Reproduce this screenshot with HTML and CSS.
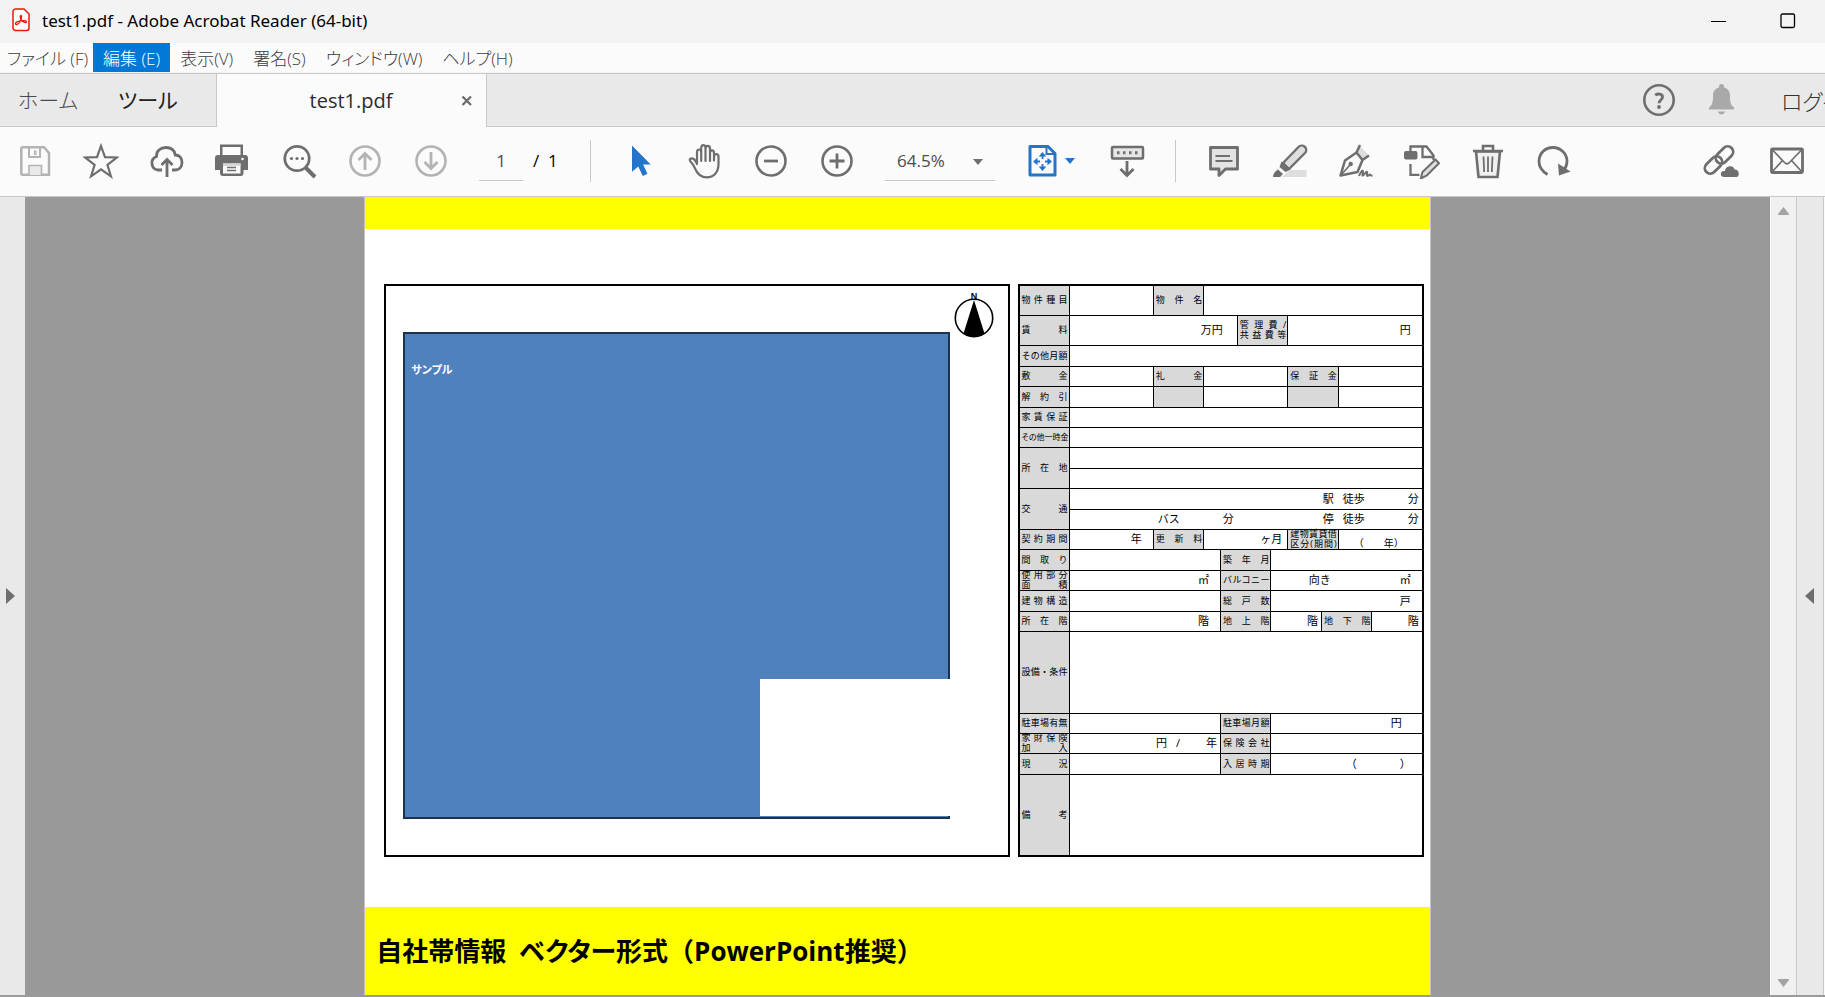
FILE: index.html
```html
<!DOCTYPE html>
<html lang="ja">
<head>
<meta charset="utf-8">
<title>test1.pdf - Adobe Acrobat Reader (64-bit)</title>
<link rel="stylesheet" href="styles.css">
</head>
<body>
<div class="window">
  <header class="titlebar">
    <svg class="app-icon" viewBox="0 0 18 24"><path d="M3.500 1h8.500l5 5v14a2.500 2.500 0 0 1-2.500 2.500h-11A2.500 2.500 0 0 1 1 20V3.500A2.500 2.500 0 0 1 3.500 1z" fill="#fff" stroke="#f0170b" stroke-width="1.500"/><path d="M3.500 16c-.8-1.500 3-3 5-3.200 2.300-.4 6-.4 6 1 0 1.700-3.200.4-4.700-1.300C8.500 11 7.500 8 8.700 7.500c1.500-.4.8 3.500-.7 6-1.300 2.200-3.700 4-4.500 2.500z" fill="none" stroke="#f0170b" stroke-width="1.300"/></svg>
    <h1 class="title">test1.pdf - Adobe Acrobat Reader (64-bit)</h1>
    <div class="controls">
      <button class="control" aria-label="最小化"><svg viewBox="0 0 16 16"><path d="M0 8.500h15" stroke="#000"/></svg></button>
      <button class="control" aria-label="最大化"><svg viewBox="0 0 16 16"><rect x="1" y="1" width="13.500" height="13.500" rx="1.500" fill="none" stroke="#000" stroke-width="1.300"/></svg></button>
    </div>
  </header>

  <nav class="menubar">
    <button class="menu">ファイル (F)</button>
    <button class="menu menu-active">編集 (E)</button>
    <button class="menu">表示(V)</button>
    <button class="menu">署名(S)</button>
    <button class="menu">ウィンドウ(W)</button>
    <button class="menu">ヘルプ(H)</button>
  </nav>

  <div class="tabbar">
    <div class="home-tabs">
      <button class="tab">ホーム</button>
      <button class="tab tab-dark">ツール</button>
    </div>
    <div class="doc-tab">
      <button class="doc-name">test1.pdf</button>
      <button class="doc-close" aria-label="閉じる"><svg viewBox="0 0 12 12"><path d="M1.500 1.500l8.500 8.500M10 1.500L1.500 10" stroke="#6a6a6a" stroke-width="2.200"/></svg></button>
    </div>
    <div class="account">
      <button class="icon" aria-label="ヘルプ"><svg viewBox="0 0 36 36"><circle cx="18" cy="18" r="14.700" fill="none" stroke="#6e6e6e" stroke-width="2.600"/><path d="M14.200 13.200c2.500-1.800 7.300-1.700 7.300 1.700 0 3-3.500 3.200-3.500 6.300" fill="none" stroke="#6e6e6e" stroke-width="2.800"/><circle cx="18" cy="25" r="1.900" fill="#6e6e6e"/></svg></button>
      <button class="icon" aria-label="通知"><svg viewBox="0 0 36 36"><path d="M16 4.500a2 2 0 0 1 5 0v1c4.500 1.200 6 4.500 6 8.500 0 6 .5 9 4 11.500v2H6v-2C9.500 23 10 20 10 14c0-4 1.500-7.300 6-8.500zM15 29.500h7c-.5 2-2 3-3.500 3s-3-1-3.500-3z" fill="#a9a9a9"/></svg></button>
      <button class="login">ログイン</button>
    </div>
  </div>

  <div class="toolbar">
    <button class="icon" aria-label="保存"><svg viewBox="0 0 36 36"><path d="M5.500 4.200H27l5 5.800v21.800H5.500a1.200 1.200 0 0 1-1.200-1.200V5.400a1.200 1.200 0 0 1 1.200-1.200z" fill="#fbfbfb" stroke="#b3b3b3" stroke-width="2.500"/><path d="M12 4.500v9.500h11V4.500" fill="none" stroke="#b3b3b3" stroke-width="2"/><path d="M12 32V22.500h12.500V32" fill="#eaeaea" stroke="#b3b3b3" stroke-width="1.600"/><path d="M17.500 8h1.500v3.500h-1.500z" fill="none" stroke="#b3b3b3" stroke-width="1.200"/></svg></button>
    <button class="icon" aria-label="スター"><svg viewBox="0 0 36 36"><path d="M18 3l4 11.200 12 .3-9.600 7.300 3.500 11.500L18 26.400l-9.900 6.900 3.500-11.500L2 14.500l12-.3z" fill="none" stroke="#6e6e6e" stroke-width="2.200"/></svg></button>
    <button class="icon" aria-label="アップロード"><svg viewBox="0 0 36 36"><path d="M13 27H9a7 7 0 0 1-1.500-13.500C7 8 11.500 4.500 17 4.500c5 0 8.500 3 9.300 7.500C31 12 33 16 33 19.500c0 4.500-3 7.500-7 7.500h-3" fill="none" stroke="#6e6e6e" stroke-width="2.800"/><path d="M18 34V16.500M12.500 22l5.500-5.500 5.500 5.500" fill="none" stroke="#6e6e6e" stroke-width="2.800"/></svg></button>
    <button class="icon" aria-label="印刷"><svg viewBox="0 0 36 36"><path d="M5 1.500h23V12H5zM3 12h27a3 3 0 0 1 3 3v12h-4.500v3a3 3 0 0 1-3 3H8a3 3 0 0 1-3-3v-3H0V15a3 3 0 0 1 3-3z" fill="#6e6e6e"/><path d="M7.500 4h18v8h-18zM8 20.500h17.500v10H8z" fill="#fbfbfb"/><path d="M8 20.500h17.500v2.500H8z" fill="#d6d6d6"/><path d="M12 24.500h9M12 27.500h9" stroke="#6e6e6e" stroke-width="1.500"/><circle cx="27.500" cy="16" r="1.300" fill="#fff"/></svg></button>
    <button class="icon" aria-label="検索"><svg viewBox="0 0 36 36"><circle cx="16" cy="15.500" r="12.200" fill="none" stroke="#6e6e6e" stroke-width="2.800"/><path d="M25 25l9 9" stroke="#6e6e6e" stroke-width="4"/><g fill="#6e6e6e"><circle cx="10.500" cy="15.500" r="1.600"/><circle cx="16" cy="15.500" r="1.600"/><circle cx="21.500" cy="15.500" r="1.600"/></g></svg></button>
    <button class="icon" aria-label="前のページ"><svg viewBox="0 0 36 36"><circle cx="18" cy="18" r="14.500" fill="none" stroke="#b3b3b3" stroke-width="2.600"/><path d="M18 27V10.500M11.500 17l6.500-6.500 6.500 6.500" fill="none" stroke="#b3b3b3" stroke-width="2.800"/></svg></button>
    <button class="icon" aria-label="次のページ"><svg viewBox="0 0 36 36"><circle cx="18" cy="18" r="14.500" fill="none" stroke="#b3b3b3" stroke-width="2.600"/><path d="M18 9v16.500M11.500 19l6.500 6.500 6.500-6.500" fill="none" stroke="#b3b3b3" stroke-width="2.800"/></svg></button>
    <div class="pager"><input class="page-no" type="text" value="1" aria-label="ページ番号"><span class="page-total">/&nbsp; 1</span></div>
    <span class="divider"></span>
    <button class="icon" aria-label="選択ツール"><svg viewBox="0 0 36 36"><path d="M11 2.500v26.300l6.200-5.300 4.600 9.500 4.600-2.200-4.300-9.300h7.600z" fill="#2474c9"/></svg></button>
    <button class="icon" aria-label="手のひらツール"><svg viewBox="0 0 36 36"><path d="M10 21V9.500c0-4 4.200-4 4.200 0V18 5c0-3.800 4.300-3.800 4.300 0v13V5.500c0-3.500 4.500-3.500 4.500 0V18v-8c0-3.500 4-3.500 4 0v7.500-4c0-3.300 4.500-3.300 4.500 0V21c0 8-4.500 13.300-12 13.300-6 0-8.700-3-10.700-7.300-1.500-3.200-2.300-5.500-5.300-8.500-2-2.500 1-4 3.200-2.500 1.800 1.300 2.300 3 3.300 5z" fill="#fbfbfb" stroke="#6e6e6e" stroke-width="2.200" stroke-linejoin="round"/></svg></button>
    <button class="icon" aria-label="縮小"><svg viewBox="0 0 36 36"><circle cx="18" cy="18" r="14.500" fill="none" stroke="#6e6e6e" stroke-width="2.600"/><path d="M11 18h14" stroke="#6e6e6e" stroke-width="2.800"/></svg></button>
    <button class="icon" aria-label="拡大"><svg viewBox="0 0 36 36"><circle cx="18" cy="18" r="14.500" fill="none" stroke="#6e6e6e" stroke-width="2.600"/><path d="M10.500 18h15M18 10.500v15" stroke="#6e6e6e" stroke-width="2.800"/></svg></button>
    <div class="zoom">
      <select class="zoom-select" aria-label="ズーム"><option>64.5%</option></select>
      <svg class="zoom-arrow" viewBox="0 0 10 6"><path d="M0 0h10L5 6z" fill="#6e6e6e"/></svg>
    </div>
    <button class="icon icon-fit" aria-label="ページに合わせる"><svg viewBox="0 0 36 36"><path d="M5 3.500h18l7 7v21.500H5z" fill="none" stroke="#2474c9" stroke-width="3" stroke-linejoin="round"/><path d="M21.500 3.500V11H30" fill="none" stroke="#2474c9" stroke-width="2"/><path d="M17.500 12v4M17.500 21v4M11 18.500h4M20 18.500h4" stroke="#2474c9" stroke-width="1.800"/><path d="M17.500 9l3.800 4.500h-7.600zM17.500 28l3.800-4.500h-7.600zM8 18.500l4.500-3.800v7.600zM27 18.500l-4.500-3.800v7.600z" fill="#2474c9"/></svg><svg class="fit-arrow" viewBox="0 0 10 6"><path d="M0 0h10L5 6z" fill="#2474c9"/></svg></button>
    <button class="icon" aria-label="スクロールモード"><svg viewBox="0 0 36 36"><rect x="3" y="4" width="31" height="11.500" rx="1" fill="#e6e6e6" stroke="#6e6e6e" stroke-width="2.500"/><path d="M8 9.800h22" stroke="#6e6e6e" stroke-width="3" stroke-dasharray="2.500 3.500"/><path d="M18 18v14M11.500 26l6.500 6.500 6.500-6.500" fill="none" stroke="#6e6e6e" stroke-width="2.800"/></svg></button>
    <span class="divider"></span>
    <button class="icon" aria-label="注釈"><svg viewBox="0 0 36 36"><path d="M4.500 4.500h27V26H19.500L13 32.500V26H4.500z" fill="#e3e3e3" stroke="#6e6e6e" stroke-width="2.800" stroke-linejoin="round"/><path d="M9.500 13H24M9.500 18h17" stroke="#6e6e6e" stroke-width="2"/></svg></button>
    <button class="icon" aria-label="ハイライト"><svg viewBox="0 0 36 36"><path d="M18 27h16.500v7H9.500z" fill="#dedede"/><path d="M11 20L26.500 4a4.400 4.400 0 0 1 6.500 6L17 26z" fill="#dedede" stroke="#6e6e6e" stroke-width="2.400" stroke-linejoin="round"/><path d="M9.500 18.500l9 8-5 2.500-6-5zM6 26.500l5 4.500-3 3H1c0-3 2-6 5-7.500z" fill="#6e6e6e"/></svg></button>
    <button class="icon" aria-label="署名"><svg viewBox="0 0 36 36"><path d="M22 3l8.500 9-6 5-6-8z" fill="#dedede"/><path d="M22 2l-3.500 7.500L7 17.500 2.500 32.500l17-3.500 5-12L31 12.500M18.500 9.500l6 7.500" fill="none" stroke="#6e6e6e" stroke-width="2.500" stroke-linejoin="round"/><path d="M3 32l9-10" stroke="#6e6e6e" stroke-width="1.700"/><circle cx="12.700" cy="21" r="2.200" fill="#6e6e6e"/><path d="M21 33c1.500-4 3.500-6 4-5s-1.500 5 0 4.500 3-4.500 4-3.500-1 4 .5 4 2-2 2.500-1.500 0 1.500 2.500 1" fill="none" stroke="#6e6e6e" stroke-width="2"/></svg></button>
    <button class="icon" aria-label="編集と変換"><svg viewBox="0 0 36 36"><path d="M6.500 8V3.500h16l7 9V17M6.500 21v10.800h9M18.500 3.500v10.500h10" fill="none" stroke="#6e6e6e" stroke-width="2.300"/><rect y="8" width="13.500" height="8.500" rx="2" fill="#6e6e6e"/><path d="M31.500 16.500l3.500 3.700-12.500 12.500-5.700 2.800 1.700-6.500z" fill="#dedede" stroke="#6e6e6e" stroke-width="2" stroke-linejoin="round"/></svg></button>
    <button class="icon" aria-label="削除"><svg viewBox="0 0 36 36"><path d="M6 8.500h24L27.500 34h-19z" fill="#f1f1f1" stroke="#6e6e6e" stroke-width="2.600" stroke-linejoin="round"/><path d="M3 8h30M13 7V3h10v4" fill="none" stroke="#6e6e6e" stroke-width="2.600"/><path d="M13.500 13.500l.7 15.500M18 13.500V29M22.500 13.500l-.7 15.500" stroke="#6e6e6e" stroke-width="1.800"/></svg></button>
    <button class="icon" aria-label="回転"><svg viewBox="0 0 36 36"><path d="M11.500 31.500C5 27.500 3 23.500 3 18.500 3 10 9.500 4.500 17 4.500S31 10.500 31 18c0 3.500-1 6.500-3.500 9" fill="none" stroke="#6e6e6e" stroke-width="2.800"/><path d="M22 20.500L34.500 28.500 23 32.500z" fill="#6e6e6e"/></svg></button>
    <button class="icon icon-end" aria-label="リンクを共有"><svg viewBox="0 0 36 36"><g fill="none" stroke="#6e6e6e" stroke-width="2.800"><rect x="-5.500" y="-10" width="11" height="20" rx="5.500" transform="translate(21.500 12) rotate(45)"/><rect x="-5.500" y="-10" width="11" height="20" rx="5.500" transform="translate(10.500 22) rotate(45)"/></g><path d="M20.500 34.500c-5-.5-4-7.500 1-7 1-6 9-6.500 10.500-1.500 5.500.5 5.500 8.500 1.500 8.500z" fill="#6e6e6e" stroke="#fbfbfb" stroke-width="1.200"/></svg></button>
    <button class="icon" aria-label="メール"><svg viewBox="0 0 36 36"><rect x="2.500" y="6" width="31" height="23.500" rx="1" fill="#fbfbfb" stroke="#6e6e6e" stroke-width="2.800"/><path d="M3 6.500l12.500 13c1.800 1.800 3.200 1.800 5 0L33 6.500M3 29l10.500-11.500M33 29L22.500 17.500" fill="none" stroke="#6e6e6e" stroke-width="1.700"/></svg></button>
  </div>

  <div class="workspace">
    <button class="side side-left" aria-label="左パネルを開く"><svg viewBox="0 0 9 16"><path d="M0 0l9 8-9 8z" fill="#6e6e6e"/></svg></button>
    <main class="canvas">
      <article class="page">
        <div class="band band-top"></div>
        <div class="content">
          <section class="plan">
            <div class="sample">サンプル<div class="cutout"></div></div>
            <svg class="compass" viewBox="0 0 40 46"><circle cx="20" cy="26" r="18.700" fill="#fff" stroke="#000" stroke-width="1.600"/><path d="M20 8L9.500 41.500c6 4.500 15 4.500 21 0z"/><text class="north" x="20" y="7" text-anchor="middle">N</text></svg>
          </section>
          <table class="sheet">
            <colgroup><col span="24"></colgroup>
            <tbody>
            <tr class="r30"><th colspan="3">物件種目</th><td colspan="5"></td><th colspan="3">物件名</th><td colspan="13"></td></tr>
            <tr class="r30"><th colspan="3">賃料</th><td colspan="10" class="in-l">万円</td><th colspan="3"><span class="two">管理費/<br>共益費等</span></th><td colspan="8" class="in-m">円</td></tr>
            <tr class="r21"><th colspan="3">その他月額</th><td colspan="21"></td></tr>
            <tr class="r20"><th colspan="3">敷金</th><td colspan="5"></td><th colspan="3">礼金</th><td colspan="5"></td><th colspan="3">保証金</th><td colspan="5"></td></tr>
            <tr class="r21"><th colspan="3">解約引</th><td colspan="5"></td><th colspan="3"></th><td colspan="5"></td><th colspan="3"></th><td colspan="5"></td></tr>
            <tr class="r20"><th colspan="3">家賃保証</th><td colspan="21"></td></tr>
            <tr class="r20"><th colspan="3" class="small">その他一時金</th><td colspan="21"></td></tr>
            <tr class="r21"><th colspan="3" rowspan="2">所在地</th><td colspan="21"></td></tr>
            <tr class="r20"><td colspan="21"></td></tr>
            <tr class="r21"><th colspan="3" rowspan="2">交通</th><td colspan="21"><span>駅</span><span class="gap-s">徒歩</span><span class="gap-l">分</span></td></tr>
            <tr class="r20"><td colspan="21"><span>バス</span><span class="gap-l">分</span><span class="gap-xl">停</span><span class="gap-s">徒歩</span><span class="gap-l">分</span></td></tr>
            <tr class="r20"><th colspan="3">契約期間</th><td colspan="5" class="in-m">年</td><th colspan="3">更新料</th><td colspan="5" class="in-s">ヶ月</td><th colspan="3"><span class="two">建物賃貸借<br>区分(期間)</span></th><td colspan="5" class="term">（　　年）</td></tr>
            <tr class="r21"><th colspan="3">間取り</th><td colspan="9"></td><th colspan="3">築年月</th><td colspan="9"></td></tr>
            <tr class="r20"><th colspan="3"><span class="two">使用部分<br>面積</span></th><td colspan="9" class="in-m">㎡</td><th colspan="3">バルコニー</th><td colspan="9" class="in-m"><span>向き</span><span class="gap-xxl">㎡</span></td></tr>
            <tr class="r21"><th colspan="3">建物構造</th><td colspan="9"></td><th colspan="3">総戸数</th><td colspan="9" class="in-m">戸</td></tr>
            <tr class="r20"><th colspan="3">所在階</th><td colspan="9" class="in-m">階</td><th colspan="3">地上階</th><td colspan="3">階</td><th colspan="3">地下階</th><td colspan="3">階</td></tr>
            <tr class="r82"><th colspan="3">設備・条件</th><td colspan="21"></td></tr>
            <tr class="r20"><th colspan="3">駐車場有無</th><td colspan="9"></td><th colspan="3">駐車場月額</th><td colspan="9" class="in-xl">円</td></tr>
            <tr class="r20"><th colspan="3"><span class="two">家財保険<br>加入</span></th><td colspan="9"><span>円</span><span class="gap-s">/</span><span class="gap-m">年</span></td><th colspan="3">保険会社</th><td colspan="9"></td></tr>
            <tr class="r21"><th colspan="3">現況</th><td colspan="9"></td><th colspan="3">入居時期</th><td colspan="9" class="in-m"><span>（</span><span class="gap-l">）</span></td></tr>
            <tr class="r82"><th colspan="3">備考</th><td colspan="21"></td></tr>
            </tbody>
          </table>
        </div>
        <footer class="band band-bottom">自社帯情報&ensp;<span class="kana">ベクター</span>形式（PowerPoint推奨）</footer>
      </article>
    </main>
    <div class="scrollbar">
      <button class="scroll-btn" aria-label="上へ"><svg viewBox="0 0 11 8"><path d="M5.500 0L11 7v1H0V7z" fill="#a3a3a3"/></svg></button>
      <button class="scroll-btn" aria-label="下へ"><svg viewBox="0 0 11 8"><path d="M5.500 8L11 1V0H0v1z" fill="#a3a3a3"/></svg></button>
    </div>
    <button class="side side-right" aria-label="右パネルを開く"><svg viewBox="0 0 9 16"><path d="M9 0L0 8l9 8z" fill="#6e6e6e"/></svg></button>
  </div>
</div>
</body>
</html>
```
FILE: styles.css
```css
* { box-sizing: border-box; }

body {
  margin: 0;
  font-family: "Open Sans", "Noto Sans CJK JP", sans-serif;
  color: #000;
}

button {
  margin: 0;
  padding: 0;
  border: 0;
  background: none;
  font: inherit;
  color: inherit;
}

svg { display: block; }

.window {
  display: flex;
  flex-direction: column;
  height: 100vh;
  overflow: hidden;
  background: #fbfbfb;
  border-bottom: 2px solid #9a9a9a;
}

/* title bar */
.titlebar {
  display: flex;
  align-items: center;
  flex: none;
  height: 43px;
  padding: 0 29px 2px 12px;
  background: #f3f3f3;
}
.app-icon { width: 18px; height: 24px; margin-bottom: 2px; }
.title { margin: 0 0 0 12px; font-family: "Noto Sans", sans-serif; font-size: 17px; font-weight: 400; line-height: 24px; }
.controls { display: flex; gap: 53px; margin-left: auto; }
.control { width: 16px; height: 16px; }

/* menus */
.menubar {
  display: flex;
  flex: none;
  height: 30px;
  border-bottom: 1px solid #f3f3f3;
}
.menu {
  height: 29px;
  padding: 2px 10px 0;
  font-size: 17px;
  font-weight: 300;
  font-feature-settings: "palt";
  line-height: 27px;
  color: #3c3c3c;
  white-space: nowrap;
}
.menu:first-child { padding-left: 7px; padding-right: 5px; }
.menu-active { background: #0078d7; color: #fff; }

/* tabs */
.tabbar {
  display: flex;
  flex: none;
  height: 54px;
  border-top: 1px solid #c8c8c8;
  background: #e9e9e9;
}
.home-tabs {
  display: flex;
  gap: 40px;
  width: 216px;
  padding: 0 0 2px 18px;
  border-bottom: 1px solid #c8c8c8;
}
.tab {
  font-size: 21px;
  font-weight: 300;
  font-feature-settings: "palt";
  color: #4b4b4b;
  white-space: nowrap;
}
.tab-dark { font-weight: 400; color: #222; }
.doc-tab {
  display: flex;
  align-items: center;
  width: 271px;
  padding-right: 13px;
  border: solid #c8c8c8;
  border-width: 0 1px;
  background: #fbfbfb;
}
.doc-name { flex: 1; padding-left: 24px; font-size: 20px; color: #2c2c2c; }
.doc-close { width: 12px; height: 12px; }
.account {
  display: flex;
  flex: 1;
  align-items: center;
  justify-content: flex-end;
  gap: 26px;
  padding-bottom: 1px;
  border-bottom: 1px solid #c8c8c8;
}
.login {
  width: 44px;
  margin-left: 16px;
  overflow: hidden;
  font-size: 22px;
  font-weight: 300;
  font-feature-settings: "palt";
  color: #333;
  text-align: left;
  white-space: nowrap;
}

/* toolbar */
.toolbar {
  display: flex;
  align-items: center;
  flex: none;
  gap: 30px;
  height: 70px;
  padding: 0 20px 2px 17px;
  border-bottom: 1px solid #c8c8c8;
}
.icon { flex: none; width: 36px; height: 36px; }
.icon svg { width: 36px; height: 36px; }
.icon-end { margin-left: auto; }
.icon-fit { display: flex; align-items: center; gap: 4px; width: 54px; }
.icon-fit .fit-arrow { width: 10px; height: 6px; }
.divider { flex: none; width: 1px; height: 42px; background: #c8c8c8; }
.pager { display: flex; align-items: center; gap: 10px; width: 81px; }
.page-no {
  width: 44px;
  height: 40px;
  padding: 0;
  border: 0;
  border-bottom: 1px solid #c8c8c8;
  background: none;
  font: 400 17px "Open Sans", sans-serif;
  color: #4b4b4b;
  text-align: center;
}
.page-total { font-size: 17px; white-space: nowrap; }
.zoom { position: relative; width: 110px; }
.zoom-select {
  width: 100%;
  height: 40px;
  padding: 0 0 0 12px;
  border: 0;
  border-bottom: 1px solid #c8c8c8;
  border-radius: 0;
  appearance: none;
  background: none;
  font: 400 17px "Open Sans", sans-serif;
  color: #4b4b4b;
}
.zoom-arrow { position: absolute; right: 12px; top: 18px; width: 10px; height: 6px; }

/* document area */
.workspace { display: flex; flex: 1; min-height: 0; }
.side {
  display: flex;
  align-items: center;
  flex: none;
  background: #e9e9e9;
}
.side svg { width: 9px; height: 16px; }
.side-left { width: 25px; padding-left: 6px; }
.side-right {
  width: 28px;
  margin-right: 1px;
  padding-left: 8px;
  border: solid #c8c8c8;
  border-width: 0 1px;
}
.scrollbar {
  display: flex;
  flex: none;
  flex-direction: column;
  justify-content: space-between;
  width: 26px;
  padding: 10px 0 8px;
  border-left: 1px solid #fbfbfb;
  background: #f0f0f0;
}
.scroll-btn { width: 11px; margin-left: 7px; }
.canvas {
  display: flex;
  flex: 1;
  justify-content: center;
  min-width: 0;
  overflow: hidden;
  background: #999;
}
.page {
  flex: none;
  width: 61%;
  background: #fff;
  box-shadow: 0 0 0 1px #c4c4c4;
}
.band { background: #ff0; }
.band-top { height: 32px; }
.band-bottom {
  height: 100px;
  padding: 22px 11px;
  font-size: 26px;
  font-weight: 700;
  line-height: 44px;
  white-space: nowrap;
}
.kana { font-feature-settings: "palt"; }
.content {
  display: grid;
  grid-template-columns: minmax(0, 625fr) minmax(0, 406fr);
  gap: 8px;
  padding: 55px 6px 50px 19px;
}
.plan {
  position: relative;
  display: flex;
  padding: 46px 58px 36px 17px;
  border: 2px solid #000;
}
.sample {
  position: relative;
  flex: 1;
  padding: 26px 6px;
  border: 2px solid #1c334e;
  background: #4f81bd;
  font-size: 11px;
  font-weight: 700;
  font-feature-settings: "palt";
  line-height: 20px;
  color: #fff;
}
.cutout {
  position: absolute;
  right: -2px;
  bottom: 1px;
  width: 35%;
  height: 137px;
  background: #fff;
}
.compass { position: absolute; top: 6px; right: 14px; width: 40px; height: 46px; }
.north { font: 700 9px "Liberation Sans", sans-serif; }

/* property sheet */
.sheet {
  width: 100%;
  border-collapse: collapse;
  border: 2px solid #000;
  table-layout: fixed;
  font-size: 11px;
  line-height: 12px;
}
.sheet th,
.sheet td { padding: 0 3px; border: 1px solid #000; white-space: nowrap; }
.sheet th {
  padding: 0 1px 0 2px;
  background: #d9d9d9;
  font-size: 9px;
  font-weight: 400;
  line-height: 10px;
  text-align: justify;
  text-align-last: justify;
  white-space: normal;
}
.sheet td { text-align: right; }
.sheet .small { font-size: 8px; font-feature-settings: "palt"; white-space: nowrap; }
.two { display: block; margin: -1px 0; }
.sheet .in-s { padding-right: 5px; }
.sheet .in-m { padding-right: 11px; }
.sheet .in-l { padding-right: 14px; }
.sheet .in-xl { padding-right: 20px; }
.sheet .term { padding-right: 18px; font-size: 10px; vertical-align: bottom; }
.gap-s { margin-left: 9px; }
.gap-m { margin-left: 26px; }
.gap-l { margin-left: 43px; }
.gap-xl { margin-left: 89px; }
.gap-xxl { margin-left: 69px; }
.r20 { height: 20px; }
.r21 { height: 21px; }
.r30 { height: 30px; }
.r82 { height: 82px; }
```
